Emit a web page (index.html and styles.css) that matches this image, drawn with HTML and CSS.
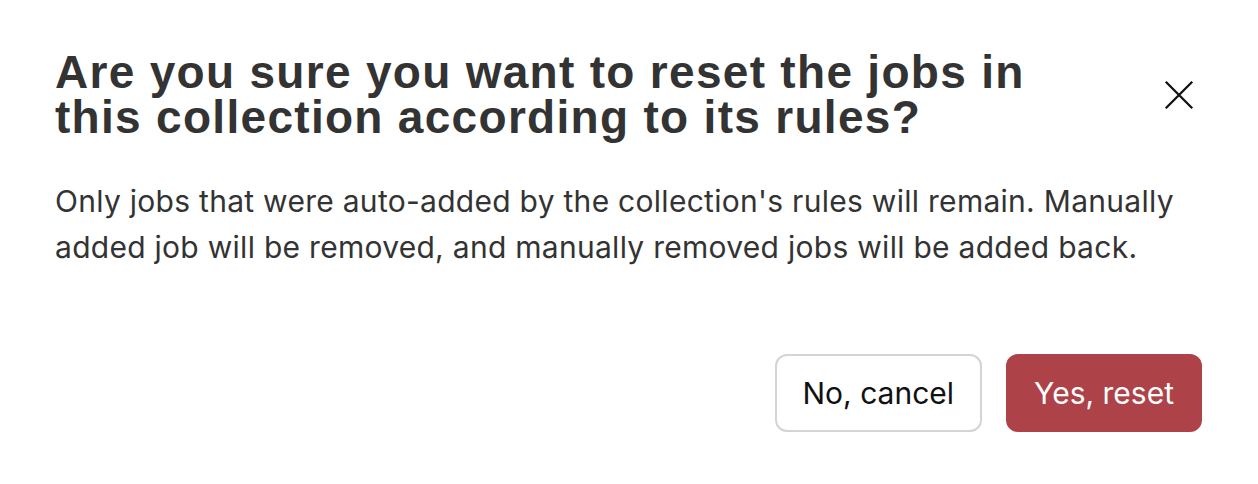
FILE: index.html
```html
<!DOCTYPE html>
<html lang="en">
  <head>
    <meta charset="UTF-8" />
    <title>Reset Collection</title>
    <link rel="stylesheet" href="styles.css">
  </head>
  <body>
    <div class="modal">
      <div class="modal-header">
        <h2>Are you sure you want to reset the jobs in this collection according to its rules?</h2>
        <button class="close-btn" aria-label="Close">
          <svg width="34" height="34" viewBox="0 0 34 34">
            <path d="M2 2 L32 32 M32 2 L2 32" stroke="#111" stroke-width="2.6" fill="none" />
          </svg>
        </button>
      </div>

      <p class="modal-text">
        Only jobs that were auto-added by the collection's rules will remain. Manually
        added job will be removed, and manually removed jobs will be added back.
      </p>

      <div class="modal-actions">
        <button class="btn btn-secondary">No, cancel</button>
        <button class="btn btn-danger">Yes, reset</button>
      </div>
    </div>
  </body>
</html>
```

FILE: styles.css
```css
:root {
  --text-dark: #333333;
  --danger: #ad4249;
  --border: #d4d4d4;
}

body {
  margin: 0;
  background: white;
  font-family: "Inter", "Liberation Sans", sans-serif;
  color: var(--text-dark);
}

.modal {
  padding: 50px 56px 40px 55px;
}

.modal-header {
  display: flex;
  justify-content: space-between;
  align-items: flex-start;
}

.modal-header h2 {
  margin: 0;
  max-width: 1010px;
  font-family: "Liberation Sans", Arial, sans-serif;
  font-size: 46px;
  font-weight: bold;
  letter-spacing: 1.3px;
  line-height: 45px;
  color: var(--text-dark);
}

.close-btn {
  background: none;
  border: none;
  padding: 0;
  margin-top: 30px;
  margin-right: 8px;
  cursor: pointer;
}

.close-btn svg {
  display: block;
  width: 30px;
  height: 30px;
}

.modal-text {
  margin: 38px 0 0;
  font-size: 30px;
  letter-spacing: 0.28px;
  line-height: 46px;
  color: var(--text-dark);
}

.modal-actions {
  display: flex;
  justify-content: flex-end;
  gap: 24px;
  margin-top: 84px;
}

.btn {
  font-family: "Inter", sans-serif;
  font-size: 30px;
  height: 78px;
  padding: 0 26px;
  border-radius: 12px;
  cursor: pointer;
}

.btn-secondary {
  background: white;
  color: #111;
  border: 2px solid var(--border);
}

.btn-danger {
  background: var(--danger);
  color: white;
  border: 2px solid var(--danger);
}
```
